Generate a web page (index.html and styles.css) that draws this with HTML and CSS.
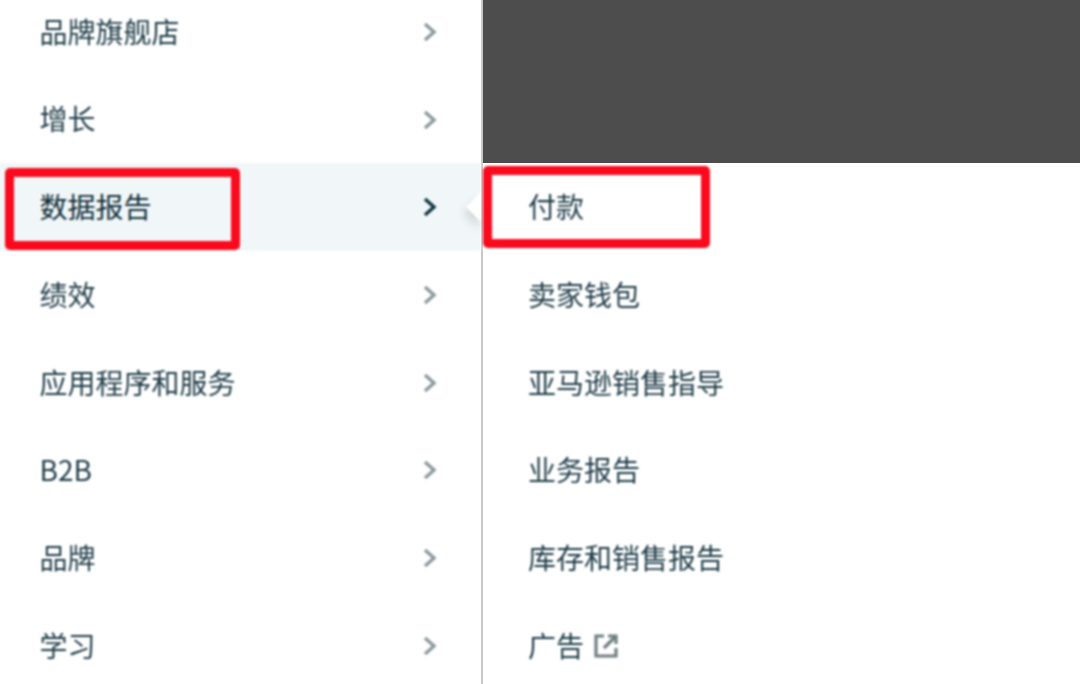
FILE: index.html
```html
<!DOCTYPE html>
<html lang="zh-CN">
<head>
  <meta charset="UTF-8" />
  <title>数据报告</title>
  <link rel="stylesheet" href="styles.css">
</head>
<body>
  <div class="menu">
    <ul class="nav">
      <li class="nav-item"><span>品牌旗舰店</span><svg class="chevron" viewBox="0 0 16 24"><path d="M3 4l9 8-9 8"/></svg></li>
      <li class="nav-item"><span class="raised">增长</span><svg class="chevron" viewBox="0 0 16 24"><path d="M3 4l9 8-9 8"/></svg></li>
      <li class="nav-item active"><span>数据报告</span><svg class="chevron" viewBox="0 0 16 24"><path d="M3 4l9 8-9 8"/></svg><i class="notch"></i></li>
      <li class="nav-item"><span>绩效</span><svg class="chevron" viewBox="0 0 16 24"><path d="M3 4l9 8-9 8"/></svg></li>
      <li class="nav-item"><span>应用程序和服务</span><svg class="chevron" viewBox="0 0 16 24"><path d="M3 4l9 8-9 8"/></svg></li>
      <li class="nav-item"><span>B2B</span><svg class="chevron" viewBox="0 0 16 24"><path d="M3 4l9 8-9 8"/></svg></li>
      <li class="nav-item"><span>品牌</span><svg class="chevron" viewBox="0 0 16 24"><path d="M3 4l9 8-9 8"/></svg></li>
      <li class="nav-item"><span>学习</span><svg class="chevron" viewBox="0 0 16 24"><path d="M3 4l9 8-9 8"/></svg></li>
    </ul>

    <div class="side">
      <div class="redacted"></div>
      <ul class="sub">
        <li class="sub-item">付款</li>
        <li class="sub-item">卖家钱包</li>
        <li class="sub-item">亚马逊销售指导</li>
        <li class="sub-item">业务报告</li>
        <li class="sub-item">库存和销售报告</li>
        <li class="sub-item">广告
          <svg class="external" viewBox="0 0 24 24"><path d="M10 2H2v20h20v-8M14 2h8v8M21 3L10 14"/></svg>
        </li>
      </ul>
    </div>
  </div>

  <div class="mark mark-left"></div>
  <div class="mark mark-right"></div>
</body>
</html>
```

FILE: styles.css
```css
html, body {
  margin: 0;
  padding: 0;
  height: 684px;
  overflow: hidden;
  background: #fff;
}

body {
  font-family: "Noto Sans CJK SC", "Open Sans", sans-serif;
  font-size: 28px;
  color: #1c3a46;
}

ul {
  list-style: none;
  margin: 0;
  padding: 0;
}

.menu {
  display: flex;
  height: 684px;
}

/* runs past the left edge so the blur doesn't fade the active row there */
.nav {
  width: 485px;
  flex: none;
  margin: -12px 0 0 -4px;
  filter: blur(0.8px);
}

.nav-item {
  position: relative;
  display: flex;
  align-items: center;
  justify-content: space-between;
  height: 87.7px;
  padding: 0 43px 0 43.5px;
  box-sizing: border-box;
}

.nav-item span {
  margin-bottom: 2px;
}

.nav-item span.raised {
  margin-bottom: 4px;
}

.nav-item.active {
  background: #f1f7f8;
  color: #0f2d3a;
}

.chevron {
  width: 16px;
  height: 24px;
  fill: none;
  stroke: #8a9a9e;
  stroke-width: 3.4;
}

.active .chevron {
  stroke: #0f3340;
}

.notch {
  position: absolute;
  right: 0;
  top: 50%;
  margin-top: -15px;
  border-style: solid;
  border-width: 15px 15px 15px 0;
  border-color: transparent #fff transparent transparent;
  filter: drop-shadow(-2px 6px 5px rgba(0, 0, 0, 0.15));
}

.side {
  flex: 1;
  border-left: 2px solid #c6c9c9;
}

.redacted {
  height: 163px;
  background: #4c4d4c;
}

.sub {
  margin-top: -0.5px;
  filter: blur(0.8px);
}

.sub-item {
  display: flex;
  align-items: center;
  gap: 10px;
  height: 87.7px;
  padding-left: 45px;
}

.external {
  width: 24px;
  height: 24px;
  margin-top: 2px;
  fill: none;
  stroke: #6f7f81;
  stroke-width: 3.2;
}

.mark {
  position: absolute;
  box-sizing: border-box;
  border: 9px solid #fb0a1e;
  border-radius: 5px;
  filter: blur(0.8px);
}

.mark-left {
  left: 5px;
  top: 168px;
  width: 235px;
  height: 82px;
}

.mark-right {
  left: 483px;
  top: 166px;
  width: 227px;
  height: 82px;
}
```
